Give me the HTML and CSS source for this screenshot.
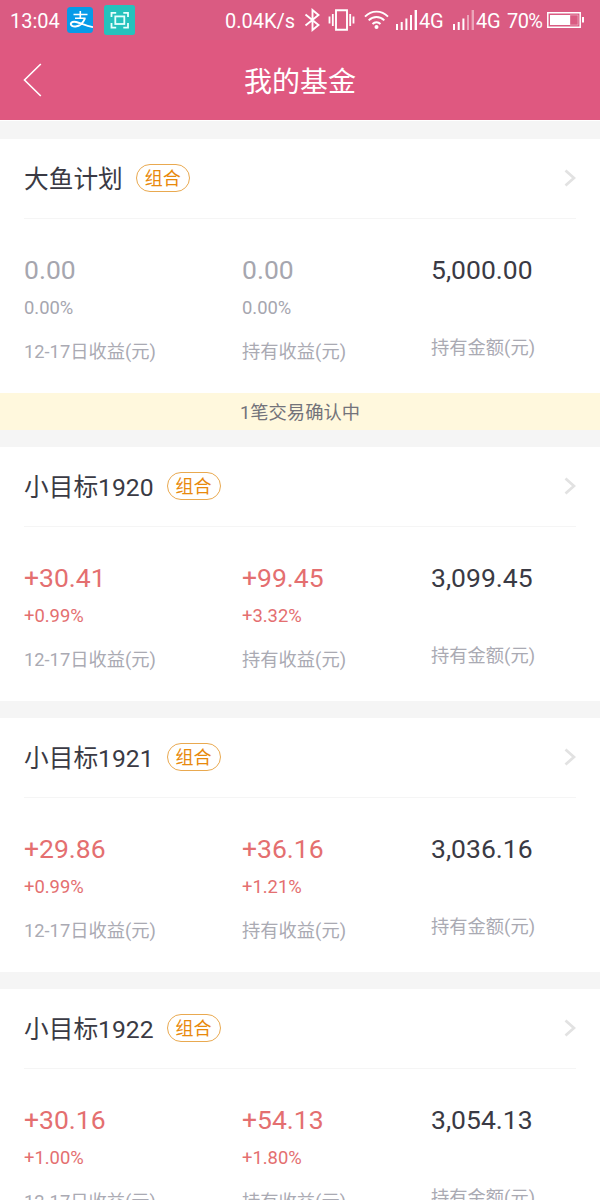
FILE: index.html
```html
<!DOCTYPE html>
<html lang="zh-CN">
<head>
<meta charset="utf-8">
<title>我的基金</title>
<link rel="stylesheet" href="styles.css">
</head>
<body>
<div class="screen">
  <header class="header">
    <div class="status">
      <span class="clock">13:04</span>
      <svg class="app-pay" width="26" height="26" viewBox="0 0 26 26"><rect width="26" height="26" rx="3.500" fill="#069be8"/><path d="M6.500 7.500h14M13.300 4v7M8 11.300h10.500" fill="none" stroke="#fff" stroke-width="1.600"/><path d="M18 11.300c-1.800 4.200-5.600 7.700-9.300 8.200-3 .3-5-1-4.900-2.600.2-1.900 2.700-2.600 5.400-1.900 4.700 1.200 8.500 3.200 16.800 5.200" fill="none" stroke="#fff" stroke-width="1.900"/></svg>
      <svg class="app-scan" width="31" height="30" viewBox="0 0 31 30"><rect width="31" height="30" rx="2.500" fill="#25c2bd"/><path d="M7.500 12V7.800h4.700M19.300 7.800H24V12M24 18v4.700h-4.700M12.200 22.700H7.500V18" fill="none" stroke="#e8fffd" stroke-width="1.800"/><rect x="11.300" y="11.400" width="9" height="7.600" fill="none" stroke="#e8fffd" stroke-width="1.800"/></svg>
      <span class="speed">0.04K/s</span>
      <svg class="bluetooth" width="17" height="24" viewBox="0 0 17 24"><path d="M1.500 6.500L14.500 17l-6 5V2l6 5L1.500 17.500" fill="none" stroke="#fff" stroke-width="1.900"/></svg>
      <svg class="vibrate" width="27" height="22" viewBox="0 0 27 22"><path d="M8 1.200h11v19.600H8z" fill="none" stroke="#fff" stroke-width="1.900"/><path d="M4.800 5v12M22.200 5v12M1.500 7.500v7M25.500 7.500v7" fill="none" stroke="#fff" stroke-width="1.800"/></svg>
      <svg class="wifi" width="25" height="20" viewBox="0 0 25 20"><path d="M1 6.600c6.500-6.700 16.500-6.700 23 0M4.700 10.400c4.400-4.600 11.200-4.600 15.600 0M8.500 14c2.300-2.400 5.700-2.400 8 0" fill="none" stroke="#fff" stroke-width="1.900"/><circle cx="12.500" cy="17" r="2" fill="#fff"/></svg>
      <svg class="signal" width="22" height="20" viewBox="0 0 22 20"><path d="M1 20v-6h2v6zM5.700 20v-8h2v8zM10.400 20V8.500h2V20zM15 20V5h2v15zM19.600 20V0H22v20z" fill="#fff"/></svg>
      <span class="net">4G</span>
      <svg class="signal signal-two" width="22" height="20" viewBox="0 0 22 20"><path d="M1 20v-6h2v6zM5.700 20v-8h2v8zM10.400 20V8.500h2V20z" fill="#fff"/><path d="M15 20V5h2v15zM19.600 20V0H22v20z" fill="#fff" opacity=".45"/></svg>
      <span class="net">4G</span>
      <span class="percent">70%</span>
      <svg class="battery" width="38" height="16" viewBox="0 0 38 16"><path d="M.8.800h32.400v14.400H.8z" fill="none" stroke="#fff" stroke-width="1.500"/><path d="M3 3h20v10H3zM35 5h2v5.500h-2z" fill="#fff"/><path d="M23 3h8v10h-8z" fill="none" stroke="#fff" stroke-width=".6" opacity=".6"/></svg>
    </div>
    <div class="nav">
      <svg class="back" width="20" height="36" viewBox="0 0 20 36"><path d="M17.800 2L1.500 18l16.300 16" fill="none" stroke="#fff" stroke-width="1.600"/></svg>
      <h1 class="page-title">我的基金</h1>
    </div>
  </header>

  <main class="funds">
    <section class="fund">
      <div class="fund-head"><h2 class="fund-name">大鱼计划</h2><span class="tag">组合</span><svg class="chevron" width="12" height="18" viewBox="0 0 12 18"><path d="M1.500 1.500L10 9l-8.500 7.500" fill="none" stroke="#e2e2e2" stroke-width="2.800"/></svg></div>
      <div class="stats">
        <div class="stat flat"><b class="value">0.00</b><span class="rate">0.00%</span><span class="label">12-17日收益(元)</span></div>
        <div class="stat flat"><b class="value">0.00</b><span class="rate">0.00%</span><span class="label">持有收益(元)</span></div>
        <div class="stat amount"><b class="value">5,000.00</b><span class="label">持有金额(元)</span></div>
      </div>
      <div class="notice">1笔交易确认中</div>
    </section>

    <section class="fund">
      <div class="fund-head"><h2 class="fund-name">小目标1920</h2><span class="tag">组合</span><svg class="chevron" width="12" height="18" viewBox="0 0 12 18"><path d="M1.500 1.500L10 9l-8.500 7.500" fill="none" stroke="#e2e2e2" stroke-width="2.800"/></svg></div>
      <div class="stats">
        <div class="stat"><b class="value">+30.41</b><span class="rate">+0.99%</span><span class="label">12-17日收益(元)</span></div>
        <div class="stat"><b class="value">+99.45</b><span class="rate">+3.32%</span><span class="label">持有收益(元)</span></div>
        <div class="stat amount"><b class="value">3,099.45</b><span class="label">持有金额(元)</span></div>
      </div>
    </section>

    <section class="fund">
      <div class="fund-head"><h2 class="fund-name">小目标1921</h2><span class="tag">组合</span><svg class="chevron" width="12" height="18" viewBox="0 0 12 18"><path d="M1.500 1.500L10 9l-8.500 7.500" fill="none" stroke="#e2e2e2" stroke-width="2.800"/></svg></div>
      <div class="stats">
        <div class="stat"><b class="value">+29.86</b><span class="rate">+0.99%</span><span class="label">12-17日收益(元)</span></div>
        <div class="stat"><b class="value">+36.16</b><span class="rate">+1.21%</span><span class="label">持有收益(元)</span></div>
        <div class="stat amount"><b class="value">3,036.16</b><span class="label">持有金额(元)</span></div>
      </div>
    </section>

    <section class="fund">
      <div class="fund-head"><h2 class="fund-name">小目标1922</h2><span class="tag">组合</span><svg class="chevron" width="12" height="18" viewBox="0 0 12 18"><path d="M1.500 1.500L10 9l-8.500 7.500" fill="none" stroke="#e2e2e2" stroke-width="2.800"/></svg></div>
      <div class="stats">
        <div class="stat"><b class="value">+30.16</b><span class="rate">+1.00%</span><span class="label">12-17日收益(元)</span></div>
        <div class="stat"><b class="value">+54.13</b><span class="rate">+1.80%</span><span class="label">持有收益(元)</span></div>
        <div class="stat amount"><b class="value">3,054.13</b><span class="label">持有金额(元)</span></div>
      </div>
    </section>
  </main>
</div>
</body>
</html>
```
FILE: styles.css
```css
* { box-sizing: border-box; }
body {
  margin: 0;
  font-family: Roboto, "Noto Sans CJK SC", sans-serif;
  color: #3a3a44;
}
.screen {
  width: 600px;
  height: 1200px;
  overflow: hidden;
  background: #f5f5f5;
}
.header {
  height: 121px;
  background: #df5880;
  border-bottom: 1px solid #fff;
  color: #fff;
}
.status {
  display: flex;
  align-items: center;
  height: 40px;
  padding-left: 10px;
  background: #da5b82;
  font-size: 20px;
  line-height: 40px;
  white-space: nowrap;
}
.status svg { flex: none; }
.clock { width: 57px; padding-top: 2px; }
.app-scan { margin-left: 11px; }
.speed { width: 70px; margin-left: 90px; padding-top: 2px; }
.bluetooth { margin-left: 9px; }
.vibrate { margin-left: 7px; }
.wifi { margin-left: 9px; }
.signal { margin-left: 6px; }
.net { width: 26px; margin-left: 2px; padding-top: 2px; letter-spacing: -0.3px; }
.signal-two { margin-left: 7px; }
.percent { width: 38px; margin-left: 5px; padding-top: 2px; letter-spacing: -0.6px; }
.battery { margin-left: 2px; }
.nav {
  display: grid;
  grid-template-columns: 60px 1fr 60px;
  align-items: center;
  height: 80px;
}
.back { margin-left: 23px; }
.page-title {
  margin: 0;
  padding-top: 6px;
  text-align: center;
  font-size: 28px;
  font-weight: 400;
  line-height: 40px;
}
.funds {
  display: flex;
  flex-direction: column;
  gap: 17px;
  padding-top: 18px;
}
.fund { flex: none; background: #fff; }
.fund-head {
  display: flex;
  align-items: center;
  height: 80px;
  padding-bottom: 1px;
  margin: 0 24px;
  border-bottom: 1px solid #f5f5f5;
}
.fund-name {
  margin: 0;
  padding-top: 3px;
  font-size: 24.7px;
  font-weight: 400;
  line-height: 36px;
}
.tag {
  width: 54px;
  height: 28px;
  margin-left: 13px;
  border: 1px solid #e9a950;
  border-radius: 14px;
  color: #e8890c;
  font-size: 18px;
  line-height: 28px;
  text-align: center;
}
.chevron { margin-left: auto; }
.stats {
  display: grid;
  grid-template-columns: 218px 189px 1fr;
  height: 174px;
  padding: 33px 0 0 24px;
}
.stat {
  display: flex;
  flex-direction: column;
  color: #e46f70;
}
.flat { color: #a6a6af; }
.amount { color: #3a3a44; }
.value {
  font-size: 26.5px;
  font-weight: 400;
  line-height: 36px;
}
.rate {
  margin-top: 7px;
  font-size: 18.4px;
  line-height: 26px;
}
.label {
  margin-top: 18px;
  color: #aaaab3;
  font-size: 18.3px;
  line-height: 26px;
}
.amount .label { margin-top: 47px; }
.notice {
  height: 37px;
  background: #fff8dd;
  color: #73737a;
  font-size: 18.3px;
  line-height: 39px;
  text-align: center;
}
```
